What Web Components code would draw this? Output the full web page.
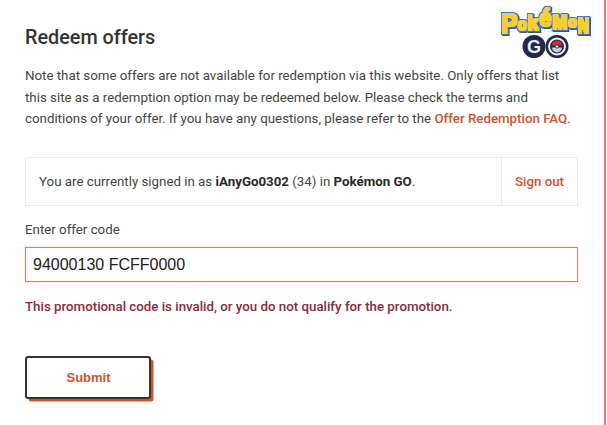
<!DOCTYPE html>
<html>
<head>
<meta charset="utf-8">
<title>Redeem offers</title>
<style>
html, body { margin: 0; padding: 0; background: #fff; }
body { font-family: Roboto, sans-serif; height: 425px; overflow: hidden; }
</style>
</head>
<body>
<redeem-page>
	<h-title slot="title">Redeem offers</h-title>
	<go-logo slot="logo"></go-logo>
	<span slot="note">Note that some offers are not available for redemption via this website. Only offers that list this site as a redemption option may be redeemed below. Please check the terms and conditions of your offer. If you have any questions, please refer to the <faq-link>Offer Redemption FAQ</faq-link>.</span>
	<signed-in-bar slot="bar">You are currently signed in as <b>iAnyGo0302</b> (34) in <b>Pokémon GO</b>.</signed-in-bar>
	<offer-field slot="field" label="Enter offer code" value="94000130 FCFF0000">This promotional code is invalid, or you do not qualify for the promotion.</offer-field>
	<submit-button slot="submit">Submit</submit-button>
</redeem-page>

<script>
// page frame: heading row, note, then the form parts
class RedeemPage extends HTMLElement {
	constructor() {
		super();
		const shadow = this.attachShadow({mode: 'open'});
		shadow.innerHTML = `
		<style>
			:host { display: block; box-sizing: border-box; width: 606px; height: 425px; position: relative; border-right: 2px solid #d9826a; padding: 27px 26px 0 25px; color: #3c3c3c; }
			.note { font-size: 13.3px; line-height: 21.5px; margin: 16px 0 27.5px; color: #444; }
			.logo { position: absolute; top: 0; left: 495px; }
			.submit { margin-top: 40px; }
		</style>
		<slot name="title"></slot>
		<div class="logo"><slot name="logo"></slot></div>
		<div class="note"><slot name="note"></slot></div>
		<slot name="bar"></slot>
		<slot name="field"></slot>
		<div class="submit"><slot name="submit"></slot></div>`;
	}
}
customElements.define('redeem-page', RedeemPage);

class HTitle extends HTMLElement {
	constructor() {
		super();
		this.attachShadow({mode: 'open'}).innerHTML = `
		<style>
			:host { display: block; font-size: 19.8px; font-weight: 500; line-height: 22px; color: #333; }
		</style>
		<slot></slot>`;
	}
}
customElements.define('h-title', HTitle);

class FaqLink extends HTMLElement {
	constructor() {
		super();
		this.attachShadow({mode: 'open'}).innerHTML = `
		<style>
			:host { display: inline; color: #d0532f; font-weight: 500; }
		</style>
		<slot></slot>`;
	}
}
customElements.define('faq-link', FaqLink);

// logo is real text fattened by a filter (yellow, blue rim, dark shadow), plus the GO discs
class GoLogo extends HTMLElement {
	constructor() {
		super();
		this.attachShadow({mode: 'open'}).innerHTML = `
		<style>
			:host { display: block; width: 100px; height: 62px; }
			svg { display: block; }
			text { font-family: "Liberation Sans", sans-serif; font-weight: 700; }
		</style>
		<svg width="100" height="62" viewBox="495 0 100 62">
			<defs>
				<filter id="chunk" x="-8%" y="-15%" width="116%" height="135%">
					<feMorphology in="SourceAlpha" operator="dilate" radius="0.8" result="fat"/>
					<feFlood flood-color="#fbd02c"/>
					<feComposite in2="fat" operator="in" result="yellow"/>
					<feMorphology in="fat" operator="dilate" radius="1.2" result="rim"/>
					<feFlood flood-color="#3a78c2"/>
					<feComposite in2="rim" operator="in" result="blue"/>
					<feOffset in="rim" dx="0.6" dy="0.9" result="low"/>
					<feFlood flood-color="#2a5596"/>
					<feComposite in2="low" operator="in" result="dark"/>
					<feMerge result="all">
						<feMergeNode in="dark"/>
						<feMergeNode in="blue"/>
						<feMergeNode in="yellow"/>
					</feMerge>
					<feGaussianBlur in="all" stdDeviation="0.3"/>
				</filter>
			</defs>
			<text filter="url(#chunk)" fill="#fbd02c"><tspan x="501.5" y="33" font-size="27" textLength="16" lengthAdjust="spacingAndGlyphs">P</tspan><tspan x="518" y="30" font-size="17" textLength="9" lengthAdjust="spacingAndGlyphs">o</tspan><tspan x="527.5" y="30" font-size="21" textLength="11" lengthAdjust="spacingAndGlyphs">k</tspan><tspan x="539.5" y="26" font-size="24" textLength="12" lengthAdjust="spacingAndGlyphs">é</tspan><tspan x="552.5" y="29" font-size="20" textLength="15" lengthAdjust="spacingAndGlyphs">M</tspan><tspan x="568.5" y="27" font-size="15" textLength="8.5" lengthAdjust="spacingAndGlyphs">o</tspan><tspan x="578" y="33" font-size="22" textLength="11" lengthAdjust="spacingAndGlyphs">N</tspan></text>
			<circle cx="534" cy="46.5" r="11.5" fill="#23294a"/>
			<circle cx="557" cy="46.5" r="11.5" fill="#23294a"/>
			<text x="534" y="53" font-size="18" fill="#eef0f5" text-anchor="middle">G</text>
			<circle cx="557" cy="46.5" r="8" fill="none" stroke="#eef0f5" stroke-width="2"/>
			<path d="M552 45.5a5 5 0 0 1 10 0z" fill="#d8283a"/>
			<path d="M552 47.5a5 5 0 0 0 10 0z" fill="#c8ccd8"/>
			<circle cx="557" cy="46.5" r="1.6" fill="#fff" stroke="#23294a" stroke-width="0.8"/>
		</svg>`;
	}
}
customElements.define('go-logo', GoLogo);

class SignedInBar extends HTMLElement {
	constructor() {
		super();
		this.attachShadow({mode: 'open'}).innerHTML = `
		<style>
			:host { display: flex; box-sizing: border-box; align-items: stretch; height: 49px; border: 1px solid #ececec; font-size: 13.3px; color: #444; }
			.who { flex: 1; display: flex; align-items: center; padding-left: 13px; }
			::slotted(b) { font-weight: 700; color: #2a2a2a; }
			.out { width: 75px; border-left: 1px solid #ececec; display: flex; align-items: center; justify-content: center; color: #d0532f; font-weight: 500; }
		</style>
		<div class="who"><span><slot></slot></span></div>
		<div class="out">Sign out</div>`;
	}
}
customElements.define('signed-in-bar', SignedInBar);

class OfferField extends HTMLElement {
	constructor() {
		super();
		const shadow = this.attachShadow({mode: 'open'});
		shadow.innerHTML = `
		<style>
			:host { display: block; margin-top: 15px; }
			label { display: block; font-size: 13.3px; line-height: 18px; color: #444; margin-bottom: 8px; }
			.box { box-sizing: border-box; height: 35px; border: 1px solid #d8836a; box-shadow: 0 0 1px rgba(216, 131, 106, 0.7); display: flex; align-items: center; padding-left: 7px; font-family: "Liberation Sans", Arial, sans-serif; font-size: 16px; color: #222; }
			.error { margin-top: 16px; font-size: 13.3px; line-height: 18px; font-weight: 500; color: #8c2b3a; }
		</style>
		<label></label>
		<div class="box"></div>
		<div class="error"><slot></slot></div>`;
		shadow.querySelector('label').textContent = this.getAttribute('label');
		shadow.querySelector('.box').textContent = this.getAttribute('value');
	}
}
customElements.define('offer-field', OfferField);

class SubmitButton extends HTMLElement {
	constructor() {
		super();
		this.attachShadow({mode: 'open'}).innerHTML = `
		<style>
			:host { box-sizing: border-box; width: 126px; height: 43px; padding: 0 0 1px 1px; border: 2px solid #333; border-radius: 3px; background: #fff; box-shadow: 3px 3px 0 -0.5px #d0532f; display: flex; align-items: center; justify-content: center; font-family: "Liberation Sans", Arial, sans-serif; font-size: 13px; font-weight: 700; color: #d0532f; }
		</style>
		<slot></slot>`;
	}
}
customElements.define('submit-button', SubmitButton);
</script>
</body>
</html>
